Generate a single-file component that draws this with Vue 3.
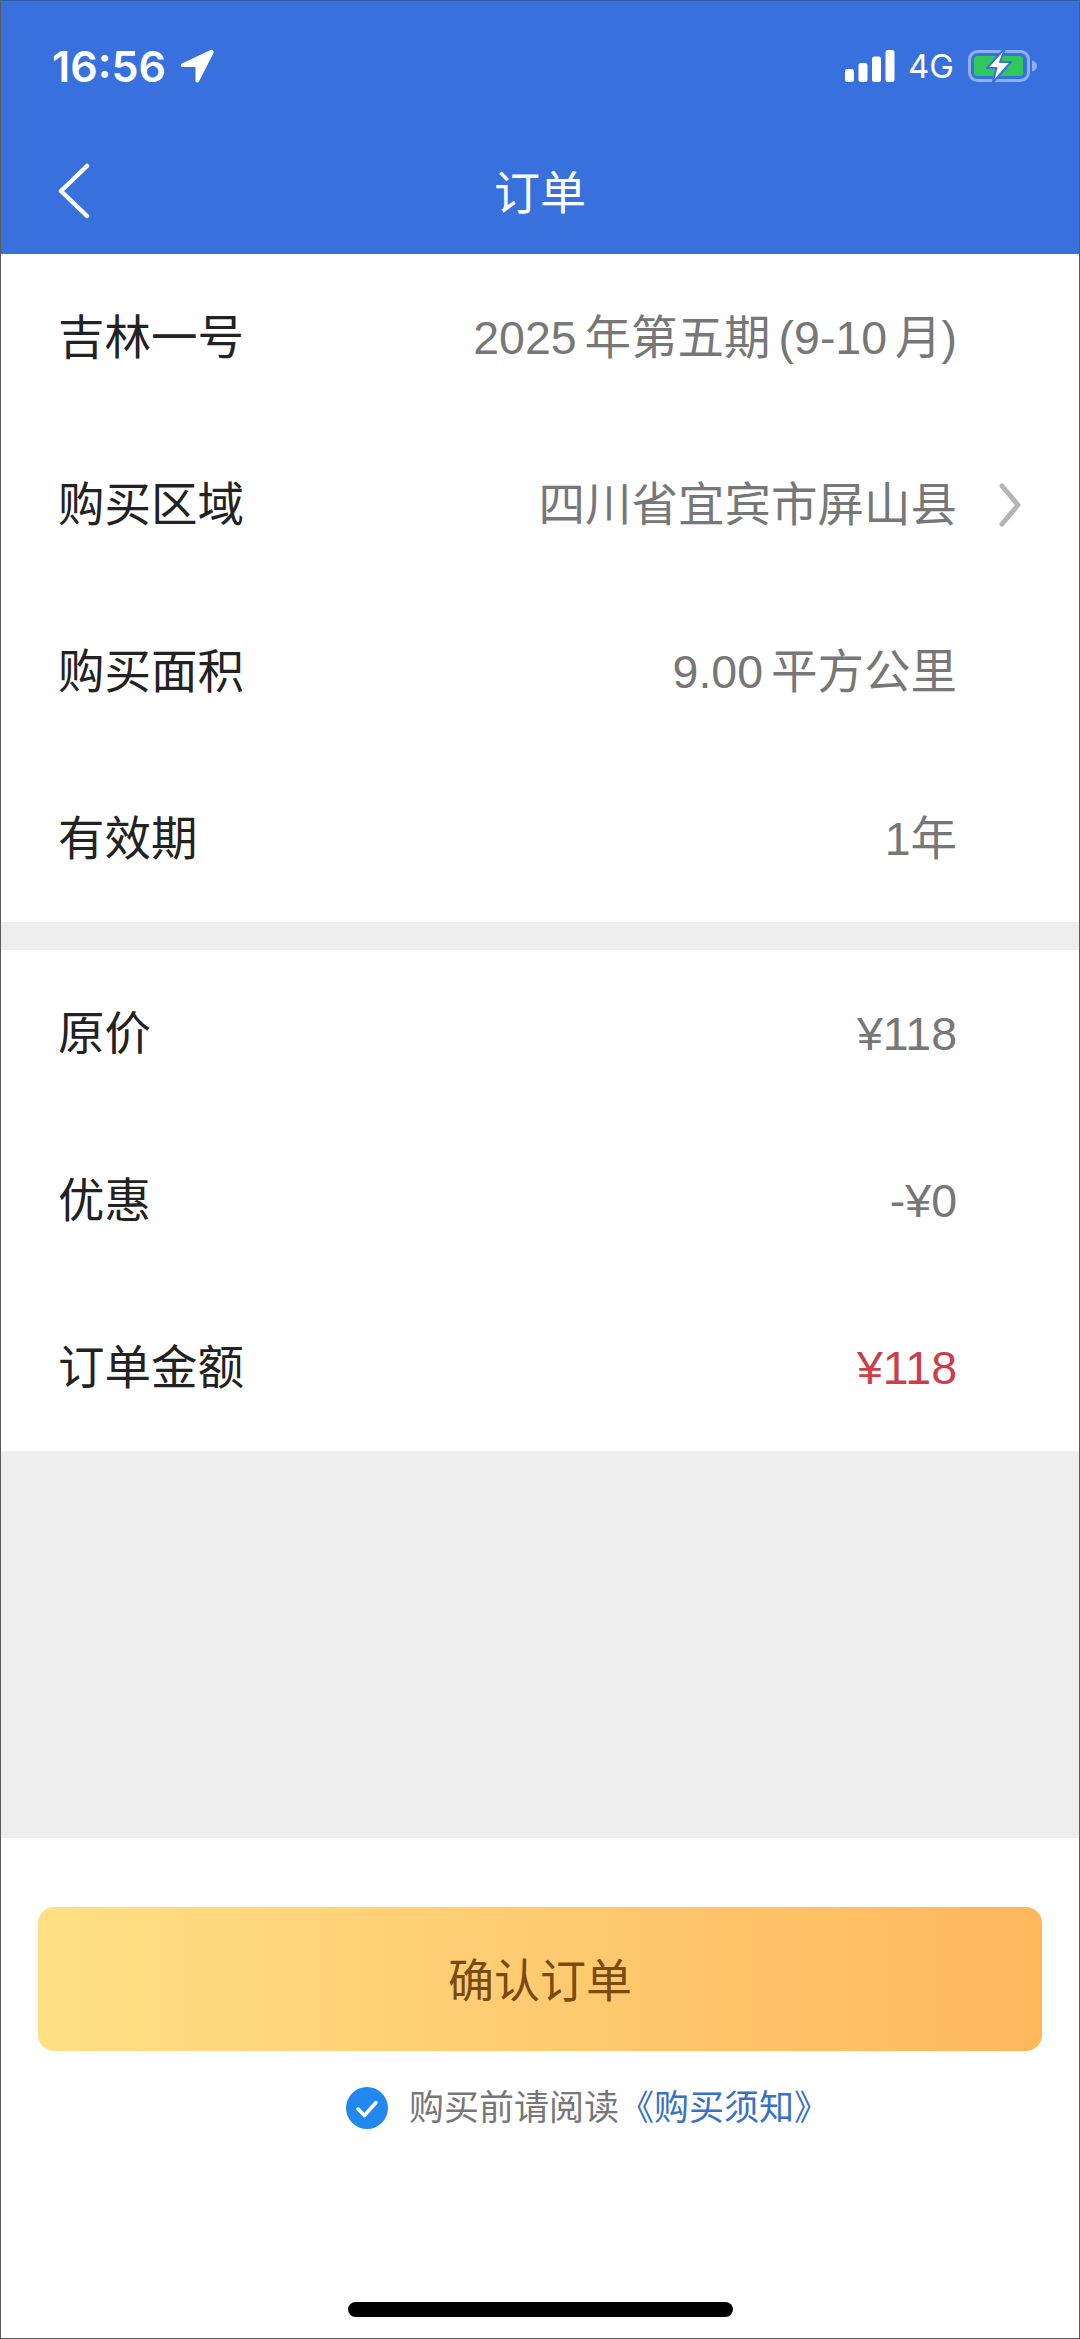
<script setup>
const orderRows = [
  { label: '吉林一号', value: '2025 年第五期 (9-10 月)' },
  { label: '购买区域', value: '四川省宜宾市屏山县', link: true },
  { label: '购买面积', value: '9.00 平方公里' },
  { label: '有效期', value: '1年' },
]

const priceRows = [
  { label: '原价', value: '¥118' },
  { label: '优惠', value: '-¥0' },
  { label: '订单金额', value: '¥118', red: true },
]
</script>

<template>
  <div class="page">
    <header class="header">
      <div class="status">
        <div class="status-left">
          <span class="time">16:56</span>
          <svg class="loc" width="34" height="35" viewBox="0 0 34 35">
            <path d="M30.500 1 2 14.500C.2 15.400.7 18 2.800 18h11.700c.6 0 1 .4 1 1v12.500c0 2.200 2.500 2.800 3.500 1L33.500 4c.8-1.900-1.200-3.800-3-3z" fill="#fff" />
          </svg>
        </div>
        <div class="status-right">
          <svg width="50" height="32" viewBox="0 0 50 32">
            <rect x="0" y="19" width="9" height="13" rx="2.500" fill="#fff" />
            <rect x="13.500" y="13" width="9" height="19" rx="2.500" fill="#fff" />
            <rect x="27" y="6.500" width="9" height="25.500" rx="2.500" fill="#fff" />
            <rect x="40.500" y="0" width="9" height="32" rx="2.500" fill="#fff" />
          </svg>
          <span class="net">4G</span>
          <svg class="battery" width="70" height="34" viewBox="0 0 70 34">
            <rect x="1.500" y="2.500" width="59" height="29" rx="8" fill="none" stroke="#8fb0f0" stroke-width="3" />
            <rect x="6" y="7" width="49" height="20" rx="3" fill="#2fc85a" />
            <path d="M64 11.500c3 .7 5 3 5 5.500s-2 4.800-5 5.500z" fill="#8fb0f0" />
            <path d="M36 0 19 19h9.500l-4 15L43 13H32l5-13z" fill="#fff" stroke="#3871de" stroke-width="2" stroke-linejoin="round" />
          </svg>
        </div>
      </div>
      <div class="nav">
        <svg class="back" width="34" height="56" viewBox="0 0 34 56">
          <path d="M30 3 4 28l26 25" fill="none" stroke="#fff" stroke-width="4.500" stroke-linecap="round" stroke-linejoin="round" />
        </svg>
        <h1 class="title">订单</h1>
      </div>
    </header>

    <section class="group first">
      <div v-for="row in orderRows" :key="row.label" class="row">
        <span class="label">{{ row.label }}</span>
        <span class="value">{{ row.value }}</span>
        <span class="arrow">
          <svg v-if="row.link" width="22" height="44" viewBox="0 0 22 44">
            <path d="M3 3 19 22 3 41" fill="none" stroke="#b5b5b5" stroke-width="5" stroke-linecap="round" stroke-linejoin="round" />
          </svg>
        </span>
      </div>
    </section>

    <section class="group">
      <div v-for="row in priceRows" :key="row.label" class="row">
        <span class="label">{{ row.label }}</span>
        <span class="value" :class="{ red: row.red }">{{ row.value }}</span>
        <span class="arrow"></span>
      </div>
    </section>

    <div class="spacer"></div>

    <footer class="footer">
      <button class="confirm">确认订单</button>
      <div class="notice">
        <svg width="42" height="42" viewBox="0 0 42 42">
          <circle cx="21" cy="21" r="21" fill="#2288f0" />
          <path d="M12 22l6.500 6.500L30 15.500" fill="none" stroke="#fff" stroke-width="3.500" stroke-linecap="round" stroke-linejoin="round" />
        </svg>
        <span class="notice-text">购买前请阅读<a class="notice-link">《购买须知》</a></span>
      </div>
      <div class="home-bar"></div>
    </footer>
  </div>
</template>

<style scoped>
.page {
  box-sizing: border-box;
  width: 1080px;
  height: 2339px;
  display: flex;
  flex-direction: column;
  background: #eeeeee;
  border: 1px solid #5a5a5a;
  border-top-color: #2f5aa8;
  font-family: "Liberation Sans", "Noto Sans CJK SC", sans-serif;
  overflow: hidden;
}

.header {
  height: 253px;
  background: #3871de;
  color: #fff;
  display: flex;
  flex-direction: column;
  flex-shrink: 0;
}

.status {
  height: 130px;
  padding: 0 41px 0 51px;
  display: flex;
  align-items: center;
  justify-content: space-between;
}

.status-left {
  display: flex;
  align-items: center;
  gap: 14px;
}

.time {
  font-family: Inter, sans-serif;
  font-size: 43px;
  font-weight: 600;
  line-height: 1;
}

.status-right {
  display: flex;
  align-items: center;
  gap: 13px;
}

.net {
  font-family: Inter, sans-serif;
  font-size: 33px;
  font-weight: 400;
  line-height: 1;
}

.battery {
  margin-left: 1px;
}

.nav {
  position: relative;
  height: 122px;
  display: flex;
  align-items: center;
  justify-content: center;
}

.back {
  position: absolute;
  left: 56px;
  top: 32px;
}

.title {
  margin: 0 0 6px;
  font-size: 46px;
  font-weight: 400;
}

.group {
  background: #fff;
}

.group.first {
  margin-bottom: 28px;
}

.row {
  box-sizing: border-box;
  height: 167px;
  padding: 0 58px 0 57px;
  display: flex;
  align-items: center;
}

.label {
  flex: 1;
  font-size: 46.5px;
  line-height: 60px;
  color: #222;
}

.value {
  font-size: 46.5px;
  line-height: 60px;
  word-spacing: -5px;
  color: #777;
}

.value.red {
  color: #c9404a;
}

.arrow {
  width: 64px;
  display: flex;
  justify-content: flex-end;
}

.spacer {
  flex: 1;
}

.footer {
  height: 500px;
  flex-shrink: 0;
  background: #fff;
  padding: 69px 37px 0;
  box-sizing: border-box;
  display: flex;
  flex-direction: column;
}

.confirm {
  flex-shrink: 0;
  width: 1004px;
  height: 144px;
  padding: 0 0 5px;
  border: none;
  border-radius: 16px;
  background: linear-gradient(90deg, #ffdf85, #ffb75c);
  color: #7a4a10;
  font-family: inherit;
  font-size: 46px;
}

.notice {
  flex-shrink: 0;
  height: 42px;
  margin-top: 36px;
  padding-left: 308px;
  display: flex;
  align-items: center;
  gap: 21px;
}

.notice-text {
  font-size: 35px;
  line-height: 42px;
  color: #777;
}

.notice-link {
  color: #3871c8;
}

.home-bar {
  flex-shrink: 0;
  width: 385px;
  height: 15px;
  margin: 173px 0 0 310px;
  border-radius: 8px;
  background: #000;
}
</style>
